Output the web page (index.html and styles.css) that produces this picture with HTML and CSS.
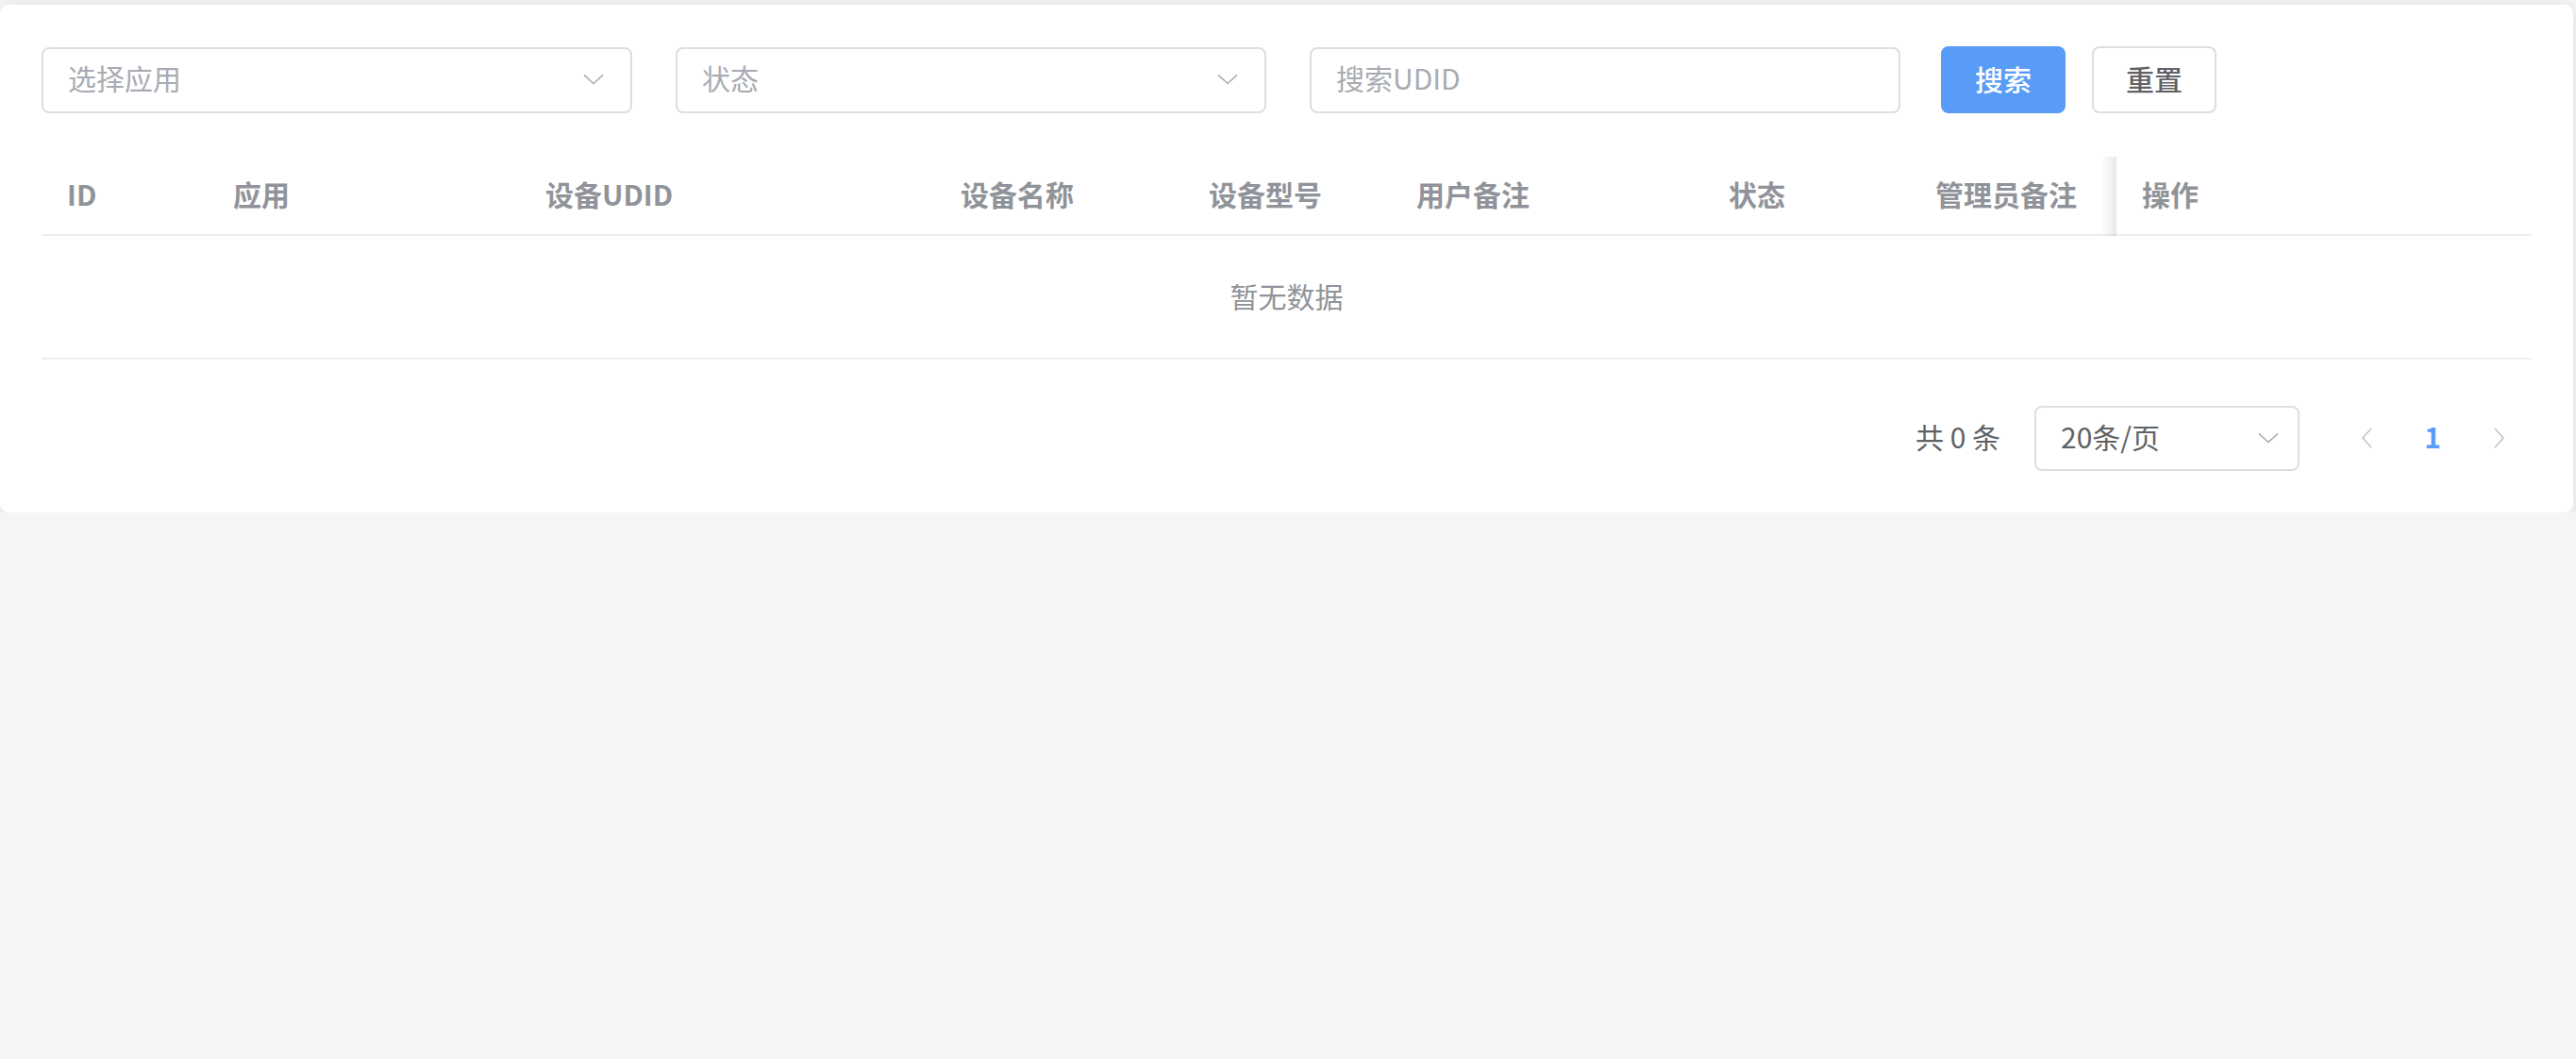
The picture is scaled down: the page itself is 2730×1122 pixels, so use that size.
FILE: index.html
```html
<!DOCTYPE html>
<html lang="zh-CN">
<head>
<meta charset="utf-8">
<title>设备列表</title>
<link rel="stylesheet" href="styles.css">
</head>
<body>
<div class="card">
  <div class="filters">
    <div class="field select">
      <span class="placeholder">选择应用</span>
      <svg class="chev" viewBox="0 0 24 12"><path d="M1 1 L12 11 L23 1" /></svg>
    </div>
    <div class="field select">
      <span class="placeholder">状态</span>
      <svg class="chev" viewBox="0 0 24 12"><path d="M1 1 L12 11 L23 1" /></svg>
    </div>
    <div class="field input">
      <span class="placeholder">搜索UDID</span>
    </div>
    <div class="buttons">
      <button class="btn btn-primary">搜索</button>
      <button class="btn">重置</button>
    </div>
  </div>

  <div class="table">
    <div class="thead">
      <div class="th">ID</div>
      <div class="th">应用</div>
      <div class="th">设备UDID</div>
      <div class="th">设备名称</div>
      <div class="th">设备型号</div>
      <div class="th">用户备注</div>
      <div class="th">状态</div>
      <div class="th">管理员备注</div>
      <div class="th th-fixed">操作</div>
    </div>
    <div class="empty">暂无数据</div>
  </div>

  <div class="pager">
    <span class="total">共 0 条</span>
    <div class="field select size">
      <span class="value">20条/页</span>
      <svg class="chev" viewBox="0 0 24 12"><path d="M1 1 L12 11 L23 1" /></svg>
    </div>
    <div class="pages">
      <span class="pbtn"><svg class="arrow" viewBox="0 0 12 24"><path d="M11 1 L1 12 L11 23" /></svg></span>
      <span class="pbtn current">1</span>
      <span class="pbtn"><svg class="arrow" viewBox="0 0 12 24"><path d="M1 1 L11 12 L1 23" /></svg></span>
    </div>
  </div>
</div>
</body>
</html>
```

FILE: styles.css
```css
* { box-sizing: border-box; }

html, body {
  margin: 0;
  padding: 0;
  background: #f5f5f5;
  font-family: "Noto Sans CJK SC", "Liberation Sans", sans-serif;
  color: #606266;
}

body {
  padding-top: 5px;
}

.card {
  width: 2727px;
  background: #ffffff;
  border-radius: 9px;
  box-shadow: 0 3px 24px rgba(0, 0, 0, 0.10);
  padding: 44px 44px 44px 44px;
}

/* filters */
.filters {
  display: flex;
  align-items: center;
  gap: 46px;
  margin-bottom: 46px;
}

.field {
  height: 70px;
  border: 2px solid #dcdedf;
  border-radius: 8px;
  display: flex;
  align-items: center;
  justify-content: space-between;
  padding: 0 28px 5px 26px;
  font-size: 30px;
  background: #fff;
}

.filters .field {
  width: 626px;
}

.placeholder {
  color: #a8abb2;
  line-height: 1;
}

.chev {
  width: 22px;
  height: 12px;
  margin-top: 4px;
  fill: none;
  stroke: #a8abb2;
  stroke-width: 1.6;
}

.buttons {
  display: flex;
  gap: 28px;
  margin-left: -3px;
}

.btn {
  width: 132px;
  height: 71px;
  border: 2px solid #dcdedf;
  border-radius: 8px;
  background: #fff;
  color: #606266;
  font-family: inherit;
  font-size: 30px;
  font-weight: 500;
  padding: 0 0 4px 0;
  line-height: 1;
}

.btn-primary {
  background: #599cf7;
  border-color: #599cf7;
  color: #ffffff;
}

/* table */
.table {
  width: 2639px;
}

.thead {
  display: grid;
  grid-template-columns: 176px 331px 440px 263px 220px 331px 219px 219px 440px;
  height: 84px;
  border-bottom: 2px solid #ebeef5;
}

.th {
  position: relative;
  display: flex;
  align-items: center;
  padding: 0 0 4px 27px;
  font-size: 30px;
  font-weight: 700;
  color: #909399;
  white-space: nowrap;
}

.th-fixed::before {
  content: "";
  position: absolute;
  left: -16px;
  top: 0;
  bottom: -2px;
  width: 16px;
  background: linear-gradient(to left, rgba(0, 0, 0, 0.09), rgba(0, 0, 0, 0));
}

.empty {
  height: 131px;
  display: flex;
  align-items: center;
  justify-content: center;
  padding-bottom: 3px;
  font-size: 30px;
  color: #909399;
  border-bottom: 2px solid #ebeef5;
}

/* pagination */
.pager {
  display: flex;
  justify-content: flex-end;
  align-items: center;
  margin-top: 48px;
  gap: 36px;
}

.total {
  font-size: 30px;
  color: #606266;
  margin-top: -4px;
}

.pager .size {
  width: 281px;
  height: 69px;
  padding-right: 20px;
}

.value {
  color: #606266;
}

.pages {
  display: flex;
}

.pbtn {
  width: 70px;
  height: 70px;
  display: flex;
  align-items: center;
  justify-content: center;
  font-size: 30px;
  padding-bottom: 4px;
}

.current {
  color: #599cf7;
  font-weight: 700;
}

.arrow {
  width: 11px;
  height: 22px;
  margin-top: 4px;
  fill: none;
  stroke: #b4b7bd;
  stroke-width: 1.4;
}
```
